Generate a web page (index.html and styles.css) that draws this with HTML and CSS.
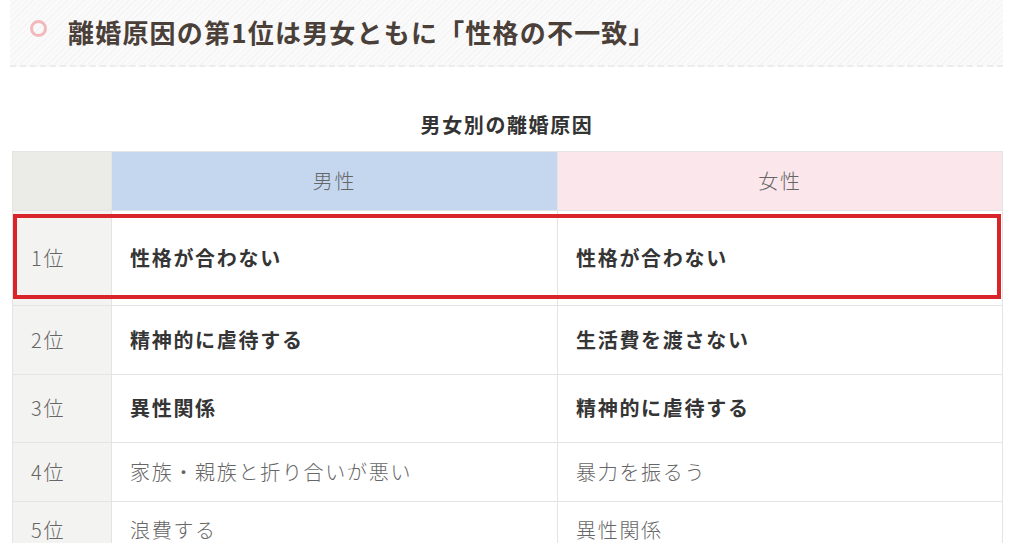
FILE: index.html
```html
<!DOCTYPE html>
<html lang="ja">
<head>
<meta charset="utf-8">
<link rel="stylesheet" href="styles.css">
</head>
<body>
<div class="article">
  <h2 class="heading">
    <span class="heading-icon"></span>
    <span class="heading-text">離婚原因の第1位は男女ともに「性格の不一致」</span>
  </h2>
  <p class="caption">男女別の離婚原因</p>
  <div class="table-wrap">
    <table class="ranking">
      <colgroup>
        <col class="col-rank">
        <col class="col-male">
        <col class="col-female">
      </colgroup>
      <thead>
        <tr class="head-row">
          <th class="th-blank"></th>
          <th class="th-male">男性</th>
          <th class="th-female">女性</th>
        </tr>
      </thead>
      <tbody>
        <tr class="row-first">
          <td class="rank">1位</td>
          <td class="strong">性格が合わない</td>
          <td class="strong">性格が合わない</td>
        </tr>
        <tr class="row-bold">
          <td class="rank">2位</td>
          <td class="strong">精神的に虐待する</td>
          <td class="strong">生活費を渡さない</td>
        </tr>
        <tr class="row-bold">
          <td class="rank">3位</td>
          <td class="strong">異性関係</td>
          <td class="strong">精神的に虐待する</td>
        </tr>
        <tr class="row-normal">
          <td class="rank">4位</td>
          <td>家族・親族と折り合いが悪い</td>
          <td>暴力を振るう</td>
        </tr>
        <tr class="row-normal">
          <td class="rank">5位</td>
          <td>浪費する</td>
          <td>異性関係</td>
        </tr>
      </tbody>
    </table>
    <div class="highlight"></div>
  </div>
</div>
</body>
</html>
```

FILE: styles.css
```css
html, body {
  margin: 0;
  padding: 0;
  background: #ffffff;
}

body {
  font-family: "Noto Sans CJK JP", "Noto Sans", sans-serif;
  overflow: hidden;
}

.article {
  width: 993px;
  padding-left: 10px;
}

.heading {
  margin: 0;
  height: 67px;
  display: flex;
  align-items: center;
  gap: 21px;
  padding-left: 20px;
  box-sizing: border-box;
  border-bottom: 2px dashed #ececec;
  background: repeating-linear-gradient(
    -45deg,
    #fafafa 0px,
    #fafafa 3px,
    #f4f4f4 3px,
    #f4f4f4 4px
  );
}

.heading-icon {
  width: 11px;
  height: 11px;
  border: 3px solid #f3b8bb;
  border-radius: 50%;
  flex: none;
  margin-top: -9px;
}

.heading-text {
  font-size: 26px;
  font-weight: 700;
  color: #4b3f39;
  letter-spacing: 1.2px;
  line-height: 36px;
  margin-top: -2px;
}

.caption {
  margin: 43px 0 11px 2px;
  width: 990px;
  text-align: center;
  font-size: 20px;
  font-weight: 700;
  color: #333333;
  letter-spacing: 1.6px;
  line-height: 30px;
}

.table-wrap {
  position: relative;
  margin-left: 2px;
  width: 990px;
}

.ranking {
  width: 990px;
  border-collapse: collapse;
  table-layout: fixed;
  font-size: 20px;
  letter-spacing: 1.7px;
  line-height: 30px;
}

.col-rank { width: 99px; }
.col-male { width: 446px; }
.col-female { width: 445px; }

.ranking th,
.ranking td {
  border: 1px solid #e4e4e4;
  padding: 0 0 0 18px;
  text-align: left;
  vertical-align: middle;
  color: #666666;
  font-weight: 400;
}

.ranking th {
  height: 58px;
  text-align: center;
  padding: 0;
  color: #666666;
  font-weight: 300;
}

.th-blank { background: #ebebe8; }
.th-male { background: #c4d7ef; }
.th-female { background: #fbe7eb; }

.ranking td.rank {
  background: #f3f3f1;
  color: #666666;
  font-weight: 300;
}

.ranking td.strong {
  font-weight: 700;
  color: #353535;
}

.row-first td { height: 94px; }
.row-bold td { height: 67.5px; }
.row-normal td { height: 57.5px; font-weight: 300; }

.highlight {
  position: absolute;
  left: 1px;
  top: 63px;
  width: 980px;
  height: 77px;
  border: 4px solid #d8242a;
}
```
